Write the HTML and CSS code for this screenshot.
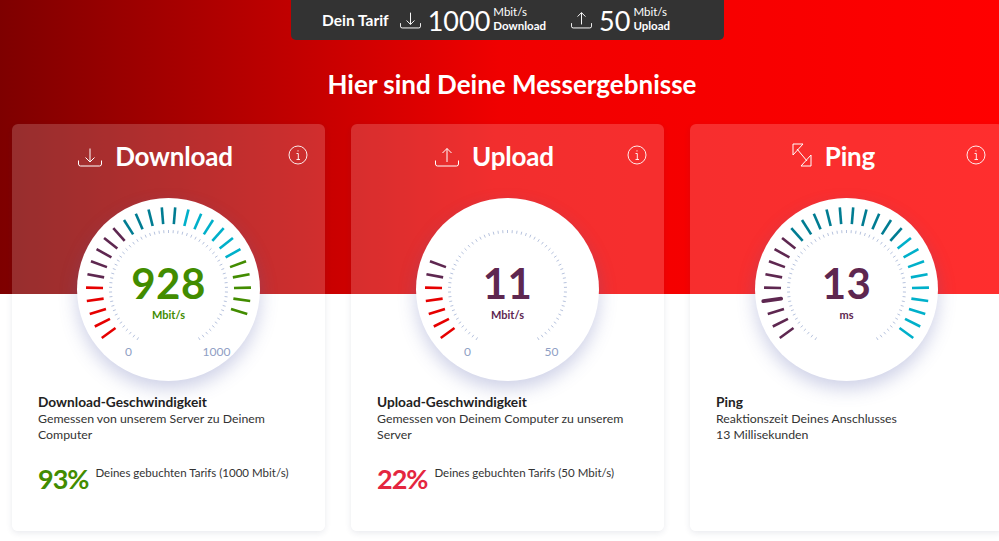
FILE: index.html
```html
<!DOCTYPE html>
<html lang="de">
<head>
<meta charset="UTF-8" />
<title>Messergebnisse</title>
<link rel="stylesheet" href="styles.css">
</head>
<body>

<div class="page">

  <div class="tariff">
    <span class="tariff-name">Dein Tarif</span>
    <svg class="tariff-icon" viewBox="0 0 24 19"><path d="M.5 12.5V16a2 2 0 0 0 2 2h19a2 2 0 0 0 2-2v-3.5M12 .5v13.5M7.5 9.5 12 14l4.5-4.5" /></svg>
    <span class="tariff-num">1000</span>
    <span class="tariff-unit">Mbit/s<b>Download</b></span>
    <svg class="tariff-icon tariff-icon-up" viewBox="0 0 24 19"><path d="M.5 12.5V16a2 2 0 0 0 2 2h19a2 2 0 0 0 2-2v-3.5M12 14V.5M7.5 5 12 .5 16.5 5" /></svg>
    <span class="tariff-num">50</span>
    <span class="tariff-unit">Mbit/s<b>Upload</b></span>
  </div>

  <h1 class="headline">Hier sind Deine Messergebnisse</h1>

  <div class="cards">

    <section class="card">
      <div class="card-head">
        <h2 class="card-title">
          <svg class="title-icon" viewBox="0 0 24 19"><path d="M.5 12.5V16a2 2 0 0 0 2 2h19a2 2 0 0 0 2-2v-3.5M12 .5v13.5M7.5 9.5 12 14l4.5-4.5" /></svg>
          Download
        </h2>
        <svg class="info" viewBox="0 0 20 20"><circle cx="10" cy="10" r="9" /><path d="M8.5 8.5h1.8v6M8.5 14.5H12M10 5.3v1.2" /></svg>
      </div>
      <div class="card-body">
        <div class="dial-wrap">
          <svg class="dial" viewBox="0 0 183 183" data-ticks="red:5,purple:5,teal:5,cyan:6,green:5">
            <text class="dial-value is-green" x="91.5" y="101">928</text>
            <text class="dial-unit is-green" x="91.5" y="120.5">Mbit/s</text>
            <text class="dial-scale" x="51.5" y="158">0</text>
            <text class="dial-scale" x="139.5" y="158">1000</text>
          </svg>
        </div>
        <div class="card-text">
          <h3>Download-Geschwindigkeit</h3>
          <p>Gemessen von unserem Server zu Deinem Computer</p>
          <div class="share">
            <span class="share-num is-green">93%</span>
            <span class="share-text">Deines gebuchten Tarifs (1000 Mbit/s)</span>
          </div>
        </div>
      </div>
    </section>

    <section class="card">
      <div class="card-head">
        <h2 class="card-title">
          <svg class="title-icon" viewBox="0 0 24 19"><path d="M.5 12.5V16a2 2 0 0 0 2 2h19a2 2 0 0 0 2-2v-3.5M12 14V.5M7.5 5 12 .5 16.5 5" /></svg>
          Upload
        </h2>
        <svg class="info" viewBox="0 0 20 20"><circle cx="10" cy="10" r="9" /><path d="M8.5 8.5h1.8v6M8.5 14.5H12M10 5.3v1.2" /></svg>
      </div>
      <div class="card-body">
        <div class="dial-wrap">
          <svg class="dial" viewBox="0 0 183 183" data-ticks="red:5,purple:2">
            <text class="dial-value" x="91.5" y="101">11</text>
            <text class="dial-unit" x="91.5" y="120.5">Mbit/s</text>
            <text class="dial-scale" x="51.5" y="158">0</text>
            <text class="dial-scale" x="135.5" y="158">50</text>
          </svg>
        </div>
        <div class="card-text">
          <h3>Upload-Geschwindigkeit</h3>
          <p>Gemessen von Deinem Computer zu unserem Server</p>
          <div class="share">
            <span class="share-num is-red">22%</span>
            <span class="share-text">Deines gebuchten Tarifs (50 Mbit/s)</span>
          </div>
        </div>
      </div>
    </section>

    <section class="card">
      <div class="card-head">
        <h2 class="card-title">
          <svg class="title-icon title-icon-ping" viewBox="0 0 20 24"><path d="M1 1h10L1 12zM19 23H9l10-11zM5 6l10 12" /></svg>
          Ping
        </h2>
        <svg class="info" viewBox="0 0 20 20"><circle cx="10" cy="10" r="9" /><path d="M8.5 8.5h1.8v6M8.5 14.5H12M10 5.3v1.2" /></svg>
      </div>
      <div class="card-body">
        <div class="dial-wrap">
          <svg class="dial" viewBox="0 0 183 183" data-ticks="purple:9,teal:10,cyan:9" data-marker="3">
            <text class="dial-value" x="91.5" y="101">13</text>
            <text class="dial-unit" x="91.5" y="120.5">ms</text>
          </svg>
        </div>
        <div class="card-text">
          <h3>Ping</h3>
          <p>Reaktionszeit Deines Anschlusses<br>13 Millisekunden</p>
        </div>
      </div>
    </section>

  </div>
</div>

<script src="gauge.js"></script>
</body>
</html>
```

FILE: styles.css
```css
* {
  box-sizing: border-box;
}
html, body {
  margin: 0;
  height: 100%;
  overflow: hidden;
}
body {
  font-family: "Lato", "Noto Sans", sans-serif;
  background: #fff;
}
.page {
  width: 1024px;
  padding-bottom: 10px;
  background: linear-gradient(to right, #7e0000, #f00000 50%, #ff0000) top left / 999px 294px no-repeat;
}

/* Tarif-Leiste */
.tariff {
  display: flex;
  align-items: center;
  width: 433px;
  height: 40px;
  margin-left: 291px;
  padding-left: 31px;
  background: #333;
  border-radius: 0 0 5px 5px;
  color: #fff;
}
.tariff-name {
  font-size: 15.5px;
  font-weight: 700;
  margin-right: 11px;
}
.tariff-icon {
  width: 21px;
  height: 17px;
  margin-right: 7px;
  fill: none;
  stroke: #fff;
  stroke-width: 1.1;
}
.tariff-icon-up {
  margin-left: 25px;
}
.tariff-num {
  font-size: 27px;
  font-weight: 400;
  margin-right: 3px;
}
.tariff-unit {
  display: flex;
  flex-direction: column;
  margin-top: -2px;
  font-size: 11.5px;
  line-height: 14px;
}

.headline {
  margin: 25px 0 0;
  height: 59px;
  font-size: 26px;
  line-height: 38px;
  font-weight: 700;
  color: #fff;
  text-align: center;
}

/* Karten */
.cards {
  display: grid;
  grid-template-columns: repeat(3, 313px);
  gap: 26px;
  padding-left: 12px;
}
.card {
  height: 407px;
  border-radius: 6px;
  box-shadow: 0 2px 6px rgba(40, 50, 90, 0.1);
}
.card-head {
  position: relative;
  height: 170px;
  padding: 16px 26px 0 0;
  background: rgba(255, 255, 255, 0.18);
  border-radius: 6px 6px 0 0;
}
.card-title {
  display: flex;
  align-items: center;
  justify-content: center;
  gap: 13px;
  margin: 0;
  font-size: 26px;
  line-height: 32px;
  font-weight: 700;
  letter-spacing: -0.2px;
  color: #fff;
}
.title-icon {
  width: 24px;
  height: 19px;
  margin-top: 3px;
  fill: none;
  stroke: #fff;
  stroke-width: 1;
}
.title-icon-ping {
  width: 20px;
  height: 24px;
  margin-top: -3px;
}
.info {
  position: absolute;
  top: 21px;
  right: 17px;
  width: 20px;
  height: 20px;
  fill: none;
  stroke: #fff;
  stroke-width: 0.9;
}
.card-body {
  height: 237px;
  background: #fff;
  border-radius: 0 0 6px 6px;
}

/* Tacho */
.dial-wrap {
  position: relative;
  top: -96px;
  width: 183px;
  height: 183px;
  margin: 0 auto -96px;
  background: #fff;
  border-radius: 50%;
  box-shadow: 0 8px 18px rgba(80, 90, 170, 0.28);
}
.dial {
  display: block;
  width: 183px;
  height: 183px;
}
.dial text {
  text-anchor: middle;
  fill: #5e2750;
}
.dial .dial-value {
  font-size: 42px;
  font-weight: 700;
  letter-spacing: 0.5px;
}
.dial .dial-unit {
  font-size: 11px;
  font-weight: 700;
}
.dial .dial-scale {
  font-size: 12px;
  fill: #8fa0c4;
}
.dial .is-green {
  fill: #428c00;
}

/* Texte */
.card-text {
  padding: 13px 26px 0;
  font-size: 12.3px;
  line-height: 16px;
  color: #333;
}
.card-text h3 {
  margin: 0;
  font-size: 13.7px;
  font-weight: 700;
  color: #222;
}
.card-text p {
  margin: 1px 0 0;
}
.share {
  display: flex;
  gap: 7px;
  margin-top: 18px;
}
.share-num {
  font-size: 27px;
  line-height: 36px;
  font-weight: 700;
  letter-spacing: -1px;
}
.share-text {
  padding-top: 3px;
  font-size: 11.5px;
  line-height: 18px;
  white-space: nowrap;
}
.is-green {
  color: #428c00;
}
.is-red {
  color: #e4263f;
}
```

FILE: gauge.js
```js
(() => {
  const NS = 'http://www.w3.org/2000/svg';
  const COLORS = { red: '#e60000', purple: '#5e2750', teal: '#007c92', cyan: '#00b0ca', green: '#428c00' };
  const C = 91.5;

  function addLine(svg, angle, r1, r2, color, width) {
    const a = angle * Math.PI / 180;
    const line = document.createElementNS(NS, 'line');
    line.setAttribute('x1', C + r1 * Math.sin(a));
    line.setAttribute('y1', C - r1 * Math.cos(a));
    line.setAttribute('x2', C + r2 * Math.sin(a));
    line.setAttribute('y2', C - r2 * Math.cos(a));
    line.setAttribute('stroke', color);
    line.setAttribute('stroke-width', width);
    svg.insertBefore(line, svg.firstChild);
    return line;
  }

  document.querySelectorAll('.dial').forEach(svg => {
    // feine Skala
    for (let i = 0; i < 65; i++) {
      addLine(svg, -148 + i * 296 / 64, 56.5, 59.5, '#b7c3de', 1);
    }
    // dicke Striche, 28 Stueck
    const colors = [];
    svg.dataset.ticks.split(',').forEach(part => {
      const [name, count] = part.split(':');
      for (let i = 0; i < +count; i++) colors.push(COLORS[name]);
    });
    colors.forEach((color, i) => {
      const angle = -126 + i * 252 / 27;
      if (String(i) === svg.dataset.marker) {
        addLine(svg, angle, 66, 84, color, 3.8).setAttribute('stroke-linecap', 'round');
      } else {
        addLine(svg, angle, 65.5, 82.5, color, 2.6);
      }
    });
  });
})();
```
